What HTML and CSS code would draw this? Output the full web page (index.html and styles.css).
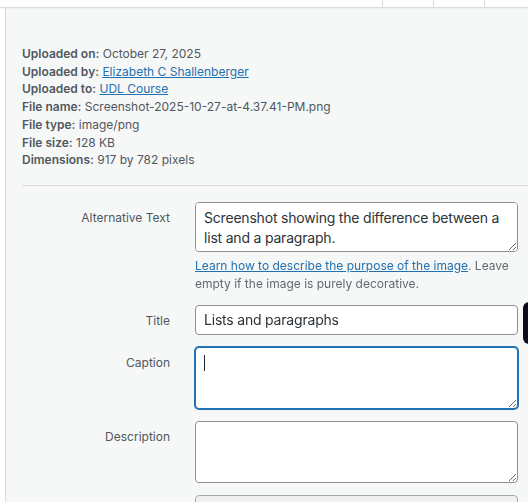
FILE: index.html
```html
<!DOCTYPE html>
<html lang="en">
<head>
<meta charset="utf-8">
<title>Attachment details</title>
<link rel="stylesheet" href="styles.css">
</head>
<body>
<div class="topbar">
  <span class="tb-spacer"></span>
  <span class="tb-btn"></span>
  <span class="tb-btn"></span>
  <span class="tb-btn tb-last"></span>
</div>
<div class="frame">
  <div class="gutter"></div>
  <aside class="sidebar">
    <div class="details">
      <div class="line"><strong>Uploaded on:</strong> October 27, 2025</div>
      <div class="line"><strong>Uploaded by:</strong> <a href="#">Elizabeth C Shallenberger</a></div>
      <div class="line"><strong>Uploaded to:</strong> <a href="#">UDL Course</a></div>
      <div class="line"><strong>File name:</strong> Screenshot-2025-10-27-at-4.37.41-PM.png</div>
      <div class="line"><strong>File type:</strong> image/png</div>
      <div class="line"><strong>File size:</strong> 128 KB</div>
      <div class="line"><strong>Dimensions:</strong> 917 by 782 pixels</div>
    </div>
    <hr class="sep">
    <div class="settings">
      <div class="setting">
        <label class="name" for="alt">Alternative Text</label>
        <div class="field">
          <textarea id="alt" class="ta ta-alt">Screenshot showing the difference between a list and a paragraph.</textarea>
          <p class="desc"><a href="#">Learn how to describe the purpose of the image</a>. Leave empty if the image is purely decorative.</p>
        </div>
      </div>
      <div class="setting">
        <label class="name" for="title">Title</label>
        <div class="field">
          <input id="title" class="inp" type="text" value="Lists and paragraphs">
        </div>
      </div>
      <div class="setting">
        <label class="name" for="caption">Caption</label>
        <div class="field">
          <textarea id="caption" class="ta ta-tall focus"></textarea>
          <span class="caret"></span>
        </div>
      </div>
      <div class="setting">
        <label class="name" for="desc">Description</label>
        <div class="field">
          <textarea id="desc" class="ta ta-tall"></textarea>
        </div>
      </div>
      <div class="setting">
        <span class="name"></span>
        <div class="field">
          <input class="inp inp-ro" type="text" readonly value="" aria-label="File URL">
        </div>
      </div>
    </div>
  </aside>
</div>
<div class="peek"></div>
</body>
</html>
```
FILE: styles.css
```css
* { box-sizing: border-box; }
html, body {
  margin: 0;
  height: 100%;
}
body {
  background: #fff;
  overflow: hidden;
  font-family: Inter, Roboto, "Liberation Sans", sans-serif;
  color: #50575e;
  position: relative;
}
.topbar {
  display: flex;
  height: 8px;
  border-bottom: 1px solid #dcdcde;
  box-shadow: 0 1px 2px rgba(0,0,0,0.04);
  position: relative;
  z-index: 1;
}
.tb-spacer { flex: 1; }
.tb-btn {
  width: 51px;
  flex-shrink: 0;
  border-left: 1px solid #dcdcde;
}
.tb-btn.tb-last { width: 44px; }
.frame {
  display: flex;
  height: calc(100% - 8px);
}
.gutter { width: 5px; flex-shrink: 0; background: #fff; }
.sidebar {
  flex: 1;
  background: #f6f7f7;
  border-left: 1px solid #dcdcde;
  padding: 37px 10px 0 16px;
}
.details {
  font-size: 12px;
  line-height: 17.7px;
  color: #50575e;
}
.details strong { font-weight: 600; }
a { color: #2271b1; text-decoration: underline; }
.sep {
  border: 0;
  border-top: 1px solid #dcdcde;
  margin: 16px -10px 16px 0;
  height: 0;
}
.settings {
  display: flex;
  flex-direction: column;
  gap: 12px;
}
.setting {
  display: grid;
  grid-template-columns: 148px 323px;
  column-gap: 25px;
  align-items: start;
}
.name {
  text-align: right;
  font-size: 12px;
  line-height: 17px;
  padding-top: 7px;
  color: #50575e;
}
.field { position: relative; }
.ta, .inp {
  display: block;
  width: 100%;
  margin: 0;
  font-family: inherit;
  font-size: 14px;
  letter-spacing: -0.2px;
  color: #2c3338;
  background: #fff;
  border: 1px solid #8c8f94;
  border-radius: 4px;
  outline: none;
}
.ta {
  line-height: 20px;
  padding: 5px 8px 4px;
  resize: vertical;
}
.ta-alt { height: 50px; }
.ta-tall { height: 62px; }
.ta.focus {
  border-color: #2271b1;
  box-shadow: 0 0 0 1px #2271b1;
}
.inp {
  height: 30px;
  line-height: 28px;
  padding: 0 8px;
}
.inp-ro { background: #f0f0f1; border-color: #a7aaad; }
.desc {
  margin: 5px 0 0;
  font-size: 12px;
  line-height: 18px;
  color: #646970;
}
.caret {
  position: absolute;
  left: 9px;
  top: 8px;
  width: 1px;
  height: 16px;
  background: #1d2327;
}
.peek {
  position: absolute;
  left: 523px;
  top: 302px;
  width: 20px;
  height: 42px;
  border-radius: 6px;
  background: #0c0b1b;
}
```
